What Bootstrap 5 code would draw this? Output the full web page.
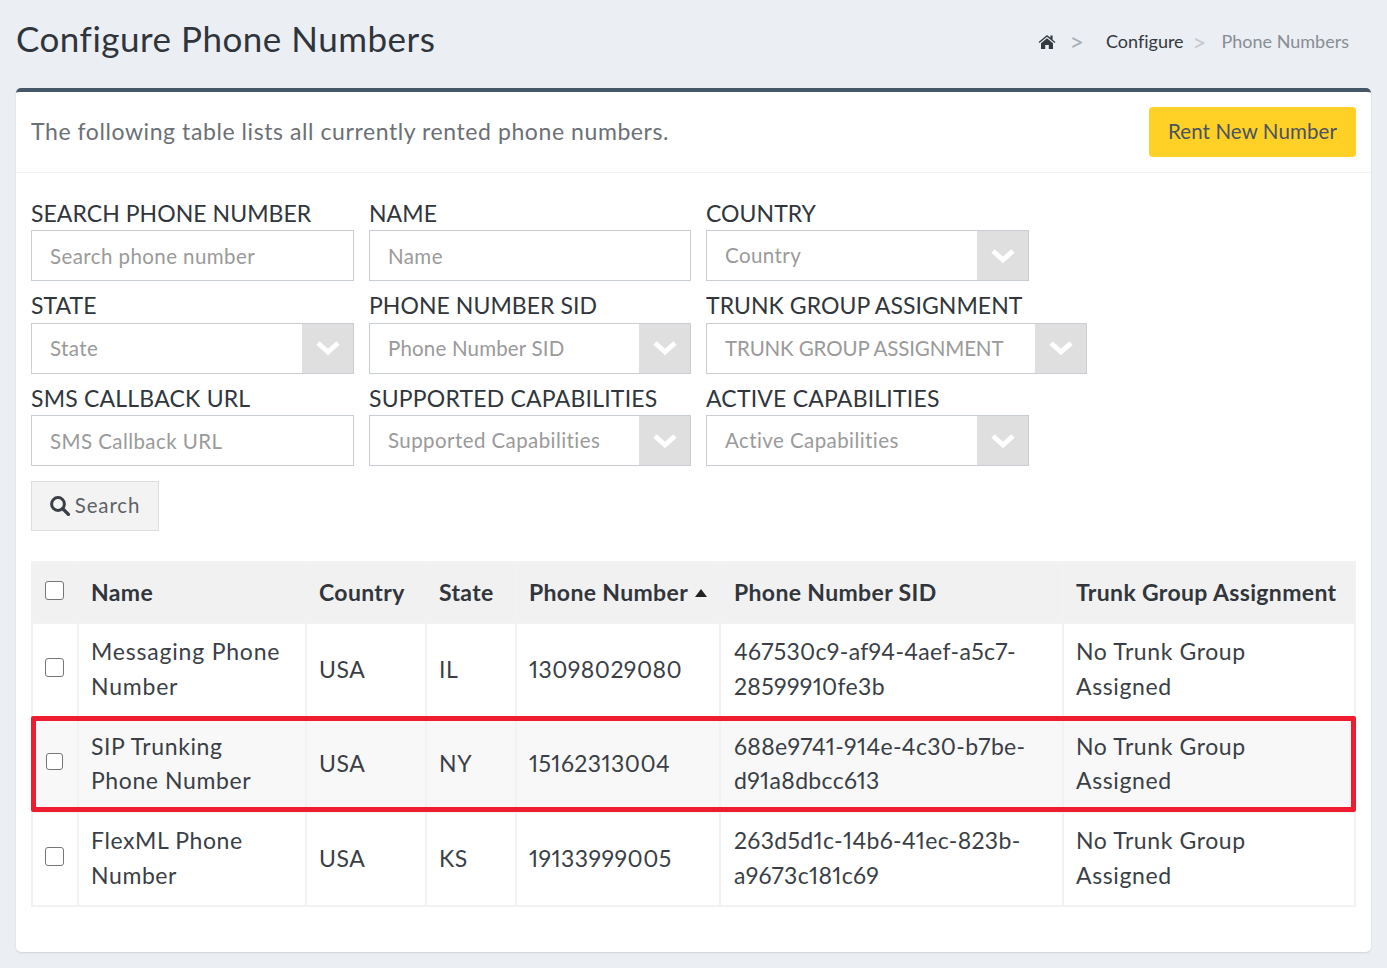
<!DOCTYPE html>
<html lang="en"><head><meta charset="utf-8"><title>Configure Phone Numbers</title>
<link href="https://cdn.jsdelivr.net/npm/bootstrap@5.3.0/dist/css/bootstrap.min.css" rel="stylesheet">
<style>
html,body{height:100%}
body{background:#ebeef3;font-family:Lato,"Liberation Sans",sans-serif;color:#3a3f47;font-size:23px;overflow:hidden;font-variant-ligatures:none}
.page-top{height:88px;padding:0 38px 0 16px}
.page-title{font-size:35px;font-weight:400;line-height:1.2;margin:0;color:#2f353b;letter-spacing:.5px;padding-bottom:13px}
.crumbs{font-size:18px;gap:0;padding-bottom:5px;color:#888d94}
.crumbs .sep{color:#a9aeb5;font-size:25px;line-height:1}
.crumbs .sep2{color:#c4c7cc;font-size:24px;line-height:1;margin-left:9px}
.crumbs .dark{color:#333a42;margin-left:22px}
.crumbs .last{margin-left:15px}
.crumbs .sep.first{margin-left:13px}
.panel{margin:0 16px;height:864px;background:#fff;border-top:4px solid #465767;border-radius:5px;box-shadow:0 1px 2px rgba(0,0,0,.12)}
.panel-head{height:81px;padding:0 15px;border-bottom:1px solid #f2f3f4}
.panel-head p{margin:0 0 1px;font-size:23px;color:#6b7076;letter-spacing:.58px}
.btn-rent{background:#ffd127;color:#4b5360;border:0;font-size:20.5px;height:50px;width:207px;border-radius:4px;padding:0 0 1px;letter-spacing:.12px}
.filters{padding:27px 15px 3px;display:grid;grid-template-columns:323px 322px 323px;column-gap:15px}
.fld{height:92.5px}
.fld label{display:block;font-size:23px;line-height:27px;color:#30363c;margin:0 0 3px;white-space:nowrap;letter-spacing:.05px}
.fld.up label{margin-top:-1px;margin-bottom:4px}
.fld.loose label{letter-spacing:.2px}
.fld .form-control,.sel-box{height:51px;border:1px solid #c9ced4;border-radius:0;font-size:20.5px;padding:0 18px;color:#999;background:#fff;letter-spacing:.42px}
.fld .form-control::placeholder{color:#9a9a9a;opacity:1}
.sel-box{display:flex;align-items:center;padding:0 0 0 18px;justify-content:space-between;color:#9a9a9a;white-space:nowrap}
.sel-box.widen{width:381px;letter-spacing:-.12px}
.sel-box.plain{letter-spacing:.18px}
.sel-arrow{width:51px;align-self:stretch;background:#dfdfdf;display:flex;align-items:center;justify-content:center;flex:none}
.btn-find{width:128px;height:50px;margin:0 0 30px 15px;background:#f3f3f3;border:1px solid #dedede;border-radius:0;font-size:20.5px;color:#5d6268;padding:0;letter-spacing:.85px;display:flex;align-items:center;justify-content:center;gap:5px}
.grid-wrap{margin:0 15px;position:relative}
.phones{table-layout:fixed;width:1325px;margin:0;border-collapse:collapse;font-size:23px;font-variant-numeric:proportional-nums}
.phones th,.phones td{border:2px solid #f2f2f2;padding:0 12px;vertical-align:middle;line-height:34.5px;color:#3a3f47;background:transparent;box-shadow:none}
.phones th{background:#f1f1f1;height:61px;font-weight:700;color:#31363c;white-space:nowrap;font-size:23px;letter-spacing:.35px}
.phones td{height:94.5px;padding-bottom:2px;letter-spacing:.6px}
.phones td.wide{letter-spacing:.8px}
.phones td.numeric{letter-spacing:.45px}
.phones td.uuid{letter-spacing:.33px;padding-left:13px}
.phones th.uuid{padding-left:13px}
.phones tr.hl td{background:#f8f8f8}
.phones td.chk{padding:0 2px 5px 0;text-align:center;letter-spacing:0}
.phones th.chk{padding:0 2px 3px 0;text-align:center;letter-spacing:0}
.phones .form-check-input{width:19px;height:19px;margin:0;border:1.5px solid #767676;border-radius:3px;display:block;margin-inline:auto;float:none}
.phones tr.hl .form-check-input{width:17px;height:17px}
.sort-up{display:inline-block;width:0;height:0;border-left:6.5px solid transparent;border-right:6.5px solid transparent;border-bottom:8px solid #222;margin-left:7px;vertical-align:4px}
.hl-frame{position:absolute;left:0;top:155px;width:1325px;height:96px;border:5px solid #ee1c2e;border-radius:2px;pointer-events:none}
</style></head><body>
<div class="page-top d-flex justify-content-between align-items-center">
  <h1 class="page-title">Configure Phone Numbers</h1>
  <div class="crumbs d-flex align-items-center">
    <svg width="18" height="15" viewBox="0 0 18 15" aria-hidden="true"><path fill="#333a42" d="M9 1 .6 8l.8 1L9 2.7 16.6 9l.8-1L14.6 5.7V1.6h-2.2v2.2zM3 9.2V15h4.2v-4h3.6v4H15V9.2L9 4.2z"/></svg>
    <span class="sep first">&gt;</span>
    <span class="dark">Configure</span>
    <span class="sep2">&gt;</span>
    <span class="last">Phone Numbers</span>
  </div>
</div>
<div class="panel">
  <div class="panel-head d-flex justify-content-between align-items-center">
    <p>The following table lists all currently rented phone numbers.</p>
    <button class="btn btn-rent" type="button">Rent New Number</button>
  </div>
  <div class="filters">
    <div class="fld"><label>SEARCH PHONE NUMBER</label><input class="form-control" placeholder="Search phone number"></div>
    <div class="fld"><label>NAME</label><input class="form-control" placeholder="Name"></div>
    <div class="fld"><label>COUNTRY</label><div class="sel-box">Country<span class="sel-arrow"><svg width="24" height="16" viewBox="0 0 24 16"><path fill="none" stroke="#fff" stroke-width="5" d="M2 3l10 9 10-9"/></svg></span></div></div>
    <div class="fld up"><label>STATE</label><div class="sel-box">State<span class="sel-arrow"><svg width="24" height="16" viewBox="0 0 24 16"><path fill="none" stroke="#fff" stroke-width="5" d="M2 3l10 9 10-9"/></svg></span></div></div>
    <div class="fld up"><label>PHONE NUMBER SID</label><div class="sel-box plain">Phone Number SID<span class="sel-arrow"><svg width="24" height="16" viewBox="0 0 24 16"><path fill="none" stroke="#fff" stroke-width="5" d="M2 3l10 9 10-9"/></svg></span></div></div>
    <div class="fld up"><label>TRUNK GROUP ASSIGNMENT</label><div class="sel-box widen">TRUNK GROUP ASSIGNMENT<span class="sel-arrow"><svg width="24" height="16" viewBox="0 0 24 16"><path fill="none" stroke="#fff" stroke-width="5" d="M2 3l10 9 10-9"/></svg></span></div></div>
    <div class="fld loose"><label>SMS CALLBACK URL</label><input class="form-control" placeholder="SMS Callback URL"></div>
    <div class="fld loose"><label>SUPPORTED CAPABILITIES</label><div class="sel-box">Supported Capabilities<span class="sel-arrow"><svg width="24" height="16" viewBox="0 0 24 16"><path fill="none" stroke="#fff" stroke-width="5" d="M2 3l10 9 10-9"/></svg></span></div></div>
    <div class="fld loose"><label>ACTIVE CAPABILITIES</label><div class="sel-box">Active Capabilities<span class="sel-arrow"><svg width="24" height="16" viewBox="0 0 24 16"><path fill="none" stroke="#fff" stroke-width="5" d="M2 3l10 9 10-9"/></svg></span></div></div>
  </div>
  <button class="btn btn-find" type="button"><svg width="20" height="20" viewBox="0 0 20 20" aria-hidden="true"><circle cx="8" cy="8" r="6.4" fill="none" stroke="#3a3f47" stroke-width="3"/><path d="M12.8 12.8 18.4 18.4" stroke="#3a3f47" stroke-width="3.4" stroke-linecap="round"/></svg>Search</button>
  <div class="grid-wrap">
    <table class="table phones">
      <colgroup><col style="width:46px"><col style="width:228px"><col style="width:120px"><col style="width:90px"><col style="width:204px"><col style="width:343px"><col style="width:292px"></colgroup>
      <thead><tr><th class="chk"><input class="form-check-input" type="checkbox"></th><th>Name</th><th>Country</th><th>State</th><th>Phone Number<span class="sort-up"></span></th><th class="uuid">Phone Number SID</th><th>Trunk Group Assignment</th></tr></thead>
      <tbody>
        <tr><td class="chk"><input class="form-check-input" type="checkbox"></td><td class="wide">Messaging Phone Number</td><td>USA</td><td>IL</td><td class="numeric">13098029080</td><td class="uuid">467530c9-af94-4aef-a5c7-28599910fe3b</td><td>No Trunk Group Assigned</td></tr>
        <tr class="hl"><td class="chk"><input class="form-check-input" type="checkbox"></td><td>SIP Trunking<br>Phone Number</td><td>USA</td><td>NY</td><td class="numeric">15162313004</td><td class="uuid">688e9741-914e-4c30-b7be-d91a8dbcc613</td><td>No Trunk Group Assigned</td></tr>
        <tr><td class="chk"><input class="form-check-input" type="checkbox"></td><td>FlexML Phone Number</td><td>USA</td><td>KS</td><td class="numeric">19133999005</td><td class="uuid">263d5d1c-14b6-41ec-823b-a9673c181c69</td><td>No Trunk Group Assigned</td></tr>
      </tbody>
    </table>
    <div class="hl-frame"></div>
  </div>
</div>
</body></html>
